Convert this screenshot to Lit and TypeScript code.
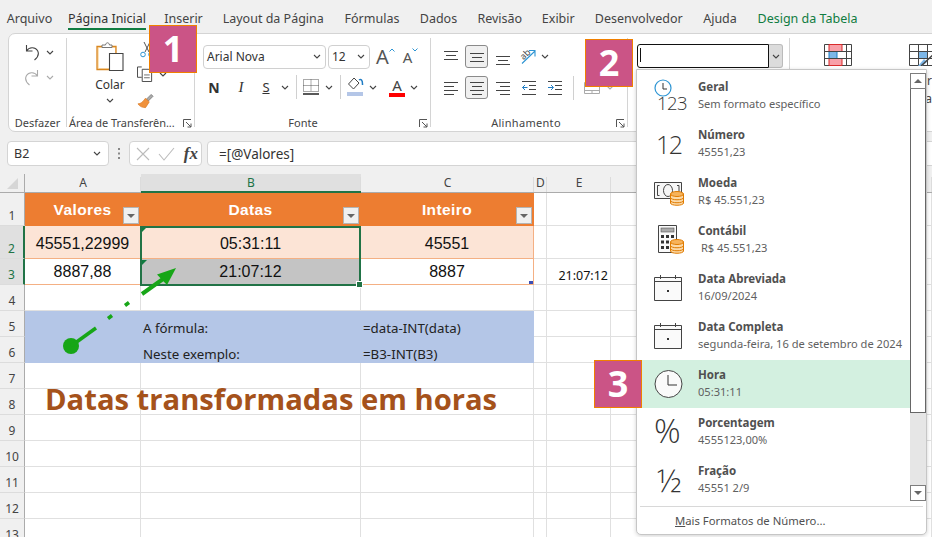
import { LitElement, html, css, svg } from "lit";
import { customElement } from "lit/decorators.js";

const chev = (c = "#444") => html`<svg class="chev" width="8" height="5" viewBox="0 0 8 5"><path d="M1 1l3 3 3-3" fill="none" stroke="${c}" stroke-width="1.1"/></svg>`;
const launcher = html`<svg class="launch" width="9" height="9" viewBox="0 0 9 9"><path d="M.5 8V.5H8M3 3l5 5M8 4.500V8H4.500" fill="none" stroke="#555"/></svg>`;
const lines = (rows: number[][], w = 14, h = 14) => html`<svg width="${w}" height="${h}" viewBox="0 0 ${w} ${h}">${rows.map(([a, b, y]) => svg`<path d="M${a} ${y + 0.5}H${b}" stroke="#444" fill="none"/>`)}</svg>`;

const coins = (x: number, y: number) => svg`<g fill="#fff" stroke="#E07B00" stroke-width="1"><path d="M${x} ${y + 2}v9c0 3 13 3 13 0v-9z" fill="#FBD9A8"/><ellipse cx="${x + 6.500}" cy="${y + 2}" rx="6.500" ry="2.500" fill="#F7B35B"/><path d="M${x} ${y + 5.500}c0 3 13 3 13 0M${x} ${y + 8.500}c0 3 13 3 13 0" fill="none"/></g>`;
const calendar = html`<svg width="30" height="28" viewBox="0 0 30 28"><path d="M.5 3.500h27v23H.5zM.5 7.500h27M6.500 1v4M21.500 1v4" fill="#fafafa" stroke="#444"/><rect x="13" y="16" width="2" height="2" fill="#333"/></svg>`;

const MENU = [
  { t: "Geral", s: "Sem formato específico", i: html`<div class="ic geral"><svg width="18" height="18" viewBox="0 0 18 18"><circle cx="9" cy="9" r="8" fill="none" stroke="#2E95D3" stroke-width="1.200"/><path d="M9 4v6h4" fill="none" stroke="#333"/></svg><span>123</span></div>` },
  { t: "Número", s: "45551,23", i: html`<div class="ic big12">12</div>` },
  { t: "Moeda", s: "R$ 45.551,23", i: html`<div class="ic"><svg class="low" width="34" height="30" viewBox="0 0 34 30"><path d="M.5 1.500h27v16H.5z" fill="#f6f6f6" stroke="#444"/><path d="M5.500 4.500h-2v10h2M23 4.500h2v10h-2" fill="none" stroke="#444"/><ellipse cx="14" cy="9.500" rx="4.500" ry="6" fill="none" stroke="#444"/>${coins(16.500, 11)}</svg></div>` },
  { t: "Contábil", s: "\u00a0R$ 45.551,23", i: html`<div class="ic"><svg width="30" height="30" viewBox="0 0 30 30"><path d="M4.500 .5h18v27h-18z" fill="#fafafa" stroke="#444"/><rect x="7" y="3" width="13" height="4" fill="#aaa" stroke="#555" stroke-width=".6"/><g fill="#333"><rect x="7" y="10" width="3" height="3"/><rect x="12" y="10" width="3" height="3"/><rect x="17" y="10" width="3" height="3"/><rect x="7" y="15.500" width="3" height="3"/><rect x="12" y="15.500" width="3" height="3"/><rect x="7" y="21" width="3" height="3"/><rect x="12" y="21" width="3" height="3"/></g>${coins(16.500, 15)}</svg></div>` },
  { t: "Data Abreviada", s: "16/09/2024", i: html`<div class="ic">${calendar}</div>` },
  { t: "Data Completa", s: "segunda-feira, 16 de setembro de 2024", i: html`<div class="ic">${calendar}</div>` },
  { t: "Hora", s: "05:31:11", on: true, i: html`<div class="ic"><svg width="30" height="30" viewBox="0 0 30 30"><circle cx="14.500" cy="15" r="13.500" fill="#fafafa" stroke="#444"/><path d="M14 6v10h9" fill="none" stroke="#333"/></svg></div>` },
  { t: "Porcentagem", s: "4555123,00%", i: html`<div class="ic pct">%</div>` },
  { t: "Fração", s: "45551 2/9", i: html`<div class="ic pct frac">½</div>` },
];

const TABS: [string, number][] = [
  ["Arquivo", 59], ["Página Inicial", 96], ["Inserir", 57], ["Layout da Página", 122.500], ["Fórmulas", 75],
  ["Dados", 58], ["Revisão", 64.500], ["Exibir", 52.500], ["Desenvolvedor", 108.500], ["Ajuda", 54], ["Design da Tabela", 121],
];

const ROWS = [33, 33, 26, 26, 26, 26, 26, 26, 26, 26, 26, 26, 26];
const COLS = ["A", "B", "C", "D", "E", ""];

const filter = html`<span class="filter"></span>`;
const tick = html`<span class="tick"></span>`;

function cell(r: number, c: number) {
  const k = `${r}${COLS[c]}`;
  const base = "cell";
  if (r === 1 && c < 3) return html`<div class="${base} head">${["Valores", "Datas", "Inteiro"][c]}${filter}</div>`;
  if (r === 2 && c < 3) return html`<div class="${base} band ${c === 2 ? "rt" : ""}">${["45551,22999", "05:31:11", "45551"][c]}${c === 1 ? tick : ""}</div>`;
  if (r === 3 && c < 3) return html`<div class="${base} last ${c === 1 ? "grey" : ""} ${c === 2 ? "rt" : ""}">${["8887,88", "21:07:12", "8887"][c]}${c === 1 ? tick : ""}${c === 2 ? html`<span class="resize"></span>` : ""}</div>`;
  if ((r === 5 || r === 6) && c < 3) {
    const txt = r === 5 ? ["", "A fórmula:", "=data-INT(data)"] : ["", "Neste exemplo:", "=B3-INT(B3)"];
    return html`<div class="${base} blue">${txt[c]}</div>`;
  }
  if (k === "3E") return html`<div class="${base} etime">21:07:12</div>`;
  if (k === "8A") return html`<div class="${base}"><span class="title">Datas transformadas em horas</span></div>`;
  return html`<div class="${base}"></div>`;
}

@customElement("app-root")
export class AppRoot extends LitElement {
  static styles = css`
    :host { display: block; position: relative; width: 932px; height: 537px; overflow: hidden; background: #f0f0f0; font-family: "Noto Sans", "Open Sans", sans-serif; font-size: 12px; color: #444; }
    svg { display: block; }
    .tabs { display: flex; height: 33px; align-items: flex-start; }
    .tab { text-align: center; flex: none; font-size: 12.500px; line-height: 17px; padding-top: 10px; color: #444; white-space: nowrap; }
    .tab span { display: inline-block; height: 18px; }
    .tab .active { border-bottom: 2px solid #107C41; color: #333; }
    .tab.green { color: #107C41; }
    .ribbon { display: flex; height: 99px; box-sizing: border-box; width: 940px; margin-left: 8px; padding: 4px 0; background: #fff; border: 1px solid #d4d4d4; border-radius: 7px; }
    .group { flex: none; box-sizing: border-box; border-right: 1px solid #d4d4d4; display: flex; flex-direction: column; }
    .gbody { flex: 1; min-height: 0; }
    .gfoot { display: flex; align-items: center; height: 14px; font-size: 11px; color: #444; line-height: 14px; white-space: nowrap; margin-bottom: -3px; }
    .gfoot .lb { flex: 1; text-align: center; overflow: hidden; }
    .gfoot .launch { flex: none; margin: 0 2px 0 2px; }
    .lb.alin { letter-spacing: .3px; padding-right: 6px; }
    .lb.fonte { padding-right: 14px; }
    .lb.area { padding-left: 2px; text-align: left; letter-spacing: -.05px; }
    .undo { width: 58px; }
    .undo .gbody { padding: 2px 0 0 15px; display: grid; grid-template-rows: 24px 26px; grid-template-columns: 22px 10px; align-items: center; justify-items: start; align-content: start; }
    .clip { width: 128px; }
    .clip .gbody { display: flex; }
    .paste { padding-top: 3px; display: flex; flex-direction: column; align-items: center; padding-left: 16px; box-sizing: border-box; width: 70px; font-size: 12px; }
    .paste .p-l { line-height: 16px; margin-top: 6px; color: #333; }
    .paste .chev { margin-top: 5px; }
    .small { display: grid; grid-template-rows: 22px 28px 26px; align-items: center; justify-items: start; align-content: start; }
    .copy { display: flex; align-items: center; gap: 5px; }
    .font { width: 236px; padding-left: 8px; }
    .font .r1 { display: flex; align-items: center; margin-top: 6px; height: 25px; }
    .sel { box-sizing: border-box; height: 24px; border: 1px solid #d0d0d0; border-radius: 4px; display: flex; align-items: center; justify-content: space-between; padding: 0 4px 0 3px; background: #fff; color: #333; font-size: 12px; }
    .sel.a { width: 123px; }
    .sel.b { width: 42px; margin-left: 2px; }
    .grow { width: 25px; display: flex; justify-content: center; font-size: 20px; line-height: 24px; color: #555; }
    .grow.first { margin-left: 3px; }
    .grow.sm { font-size: 15px; }
    .grow svg { margin-top: 3px; }
    .font .r2 { display: grid; grid-template-columns: 27px 25px 26px 15px 7px 22px 15px 7px 22px 19px 22px 8px; height: 30px; align-items: center; margin-top: 3px; }
    .c { width: 22px; text-align: center; color: #333; font-size: 14px; }
    .c.n { font-weight: 700; }
    .c.i { font-style: italic; font-family: "Liberation Serif", serif; font-size: 15px; }
    .c.s { text-decoration: underline; font-size: 13px; }
    .vsep { width: 1px; height: 24px; background: #d0d0d0; }
    .fontA { display: flex; flex-direction: column; align-items: center; width: 18px; font-size: 15px; line-height: 14px; color: #444; }
    .fontA i { display: block; width: 16px; height: 4px; background: #f00; margin-top: 1px; }
    .align { width: 197px; padding-left: 13px; }
    .align .r1 { display: grid; grid-template-columns: 21px 31px 24px 21px 8px; align-items: center; margin-top: 6px; height: 25px; }
    .align .r2 { display: grid; grid-template-columns: 21px 31px 26px 26px 25px 11px 22px 8px; align-items: center; height: 25px; margin-top: 6px; }
    .pressed { box-sizing: border-box; width: 23px; height: 23px; background: #f0f0f0; border: 1px solid #8a8a8a; border-radius: 3px; display: flex; align-items: center; justify-content: center; }
    .shift { margin-top: 6px; }
    .number { width: 162px; padding-left: 9px; }
    .numbox { display: flex; margin-top: 6px; width: 146px; height: 24px; box-sizing: border-box; }
    .numbox .in { flex: 1; border: 1.500px solid #111; border-radius: 3px 0 0 3px; }
    .numbox .in::before { content: ""; display: block; width: 1px; height: 14px; background: #111; margin: 3px 0 0 2px; }
    .numbox .bt { width: 13px; background: #dcdcdc; border: 1px solid #bbb; border-left: none; border-radius: 0 3px 3px 0; display: flex; align-items: center; justify-content: center; }
    .styles { display: flex; padding-left: 34px; gap: 57px; padding-top: 6px; align-items: flex-start; }
    .fmt { font-size: 12px; line-height: 18px; color: #444; text-align: right; margin: 6px 0 0 -60px; width: 83px; white-space: nowrap; }
    .fbar { display: flex; height: 25px; margin-top: 9px; align-items: stretch; }
    .fbox { box-sizing: border-box; background: #fff; border: 1px solid #d4d4d4; border-radius: 4px; display: flex; align-items: center; color: #333; }
    .name { margin-left: 7px; width: 102px; padding: 0 7px 0 6px; justify-content: space-between; font-size: 12.500px; }
    .dots { width: 20px; display: flex; align-items: center; justify-content: center; }
    .fx { width: 73px; padding: 0 3px 0 6px; justify-content: space-between; }
    .fx em { font-family: "Liberation Serif", serif; font-size: 17px; font-weight: 700; font-style: italic; color: #444; }
    .fv { margin-left: 5px; flex: 1; margin-right: -10px; padding-left: 11px; font-size: 13.500px; }
    .sheet { position: relative; margin-top: 8px; display: grid; grid-template-columns: 25px 116px 220px 173px 13px 64px 321px; grid-template-rows: 19px 33px 33px 26px 26px 26px 26px 26px 26px 26px 26px 26px 26px 26px; width: 932px; }
    .ch { background: #f0f0f0; border-bottom: 1px solid #ababab; box-sizing: border-box; text-align: center; font-size: 12px; line-height: 18px; position: relative; color: #444; }
    .ch::after { content: ""; position: absolute; right: 0; top: 3px; bottom: 0; width: 1px; background: #dcdcdc; }
    .ch.on { background: #e0e0e0; border-bottom: 2px solid #217346; color: #217346; }
    .corner { background: #f0f0f0; border-bottom: 1px solid #ababab; border-right: 1px solid #ababab; box-sizing: border-box; display: flex; align-items: center; justify-content: center; }
    .rh { box-sizing: border-box; background: #f0f0f0; border-right: 1px solid #ababab; border-bottom: 1px solid #dcdcdc; display: flex; align-items: flex-end; justify-content: center; font-size: 12px; line-height: 17px; padding-bottom: 1px; color: #444; }
    .rh.on { background: #e0e0e0; color: #217346; border-right: 2px solid #217346; }
    .cell { box-sizing: border-box; background: #fff; border-right: 1px solid #e0e0e0; border-bottom: 1px solid #e0e0e0; position: relative; display: flex; align-items: center; justify-content: center; color: #111; font-family: "Liberation Sans", Arial, sans-serif; font-size: 16px; }
    .head { background: #ED7D31; color: #fff; font-weight: 700; font-size: 15.500px; letter-spacing: .4px; border-color: #ED7D31; padding-top: 2px; }
    .band { background: #FCE4D6; border-right-color: #FCE4D6; border-bottom-color: #F4B084; padding-top: 3px; }
    .last { border-right-color: transparent; border-bottom-color: #F4B084; }
    .grey { background: #C4C4C4; }
    .rt { border-right-color: #F4B084; }
    .blue { background: #B4C6E7; border-color: #B4C6E7; justify-content: flex-start; align-items: flex-end; padding: 0 0 0 2px; font-family: "Noto Sans", sans-serif; font-size: 13.300px; line-height: 16px; color: #222; }
    .etime { font-family: "Noto Sans", sans-serif; font-size: 12.500px; justify-content: flex-end; align-items: flex-end; padding-right: 2px; line-height: 17px; }
    .title { position: absolute; left: 20px; top: -3px; white-space: nowrap; z-index: 2; font-family: "Open Sans", sans-serif; font-weight: 700; font-size: 29.200px; line-height: 26px; color: #A5521B; }
    .filter { position: absolute; right: 1px; bottom: 1px; width: 16px; height: 17px; box-sizing: border-box; background: #f0f0f0; border: 1px solid #b4b4b4; }
    .filter::after { content: ""; position: absolute; left: 3px; top: 6px; border-left: 4px solid transparent; border-right: 4px solid transparent; border-top: 4px solid #666; }
    .tick { position: absolute; left: 1px; top: 1px; border-top: 5px solid #107C41; border-right: 5px solid transparent; }
    .resize { position: absolute; right: 0; bottom: 0; width: 4px; height: 3px; background: #3a4fb5; }
    .selection { position: absolute; left: 140px; top: 52px; width: 221px; height: 60px; box-sizing: border-box; border: 2px solid #217346; pointer-events: none; z-index: 3; }
    .selection::after { content: ""; position: absolute; right: -4px; bottom: -4px; width: 5px; height: 5px; background: #217346; border: 1px solid #fff; }
    .arrow { position: absolute; left: 0; top: 0; z-index: 4; pointer-events: none; }
    .badge { position: absolute; box-sizing: border-box; width: 48px; height: 48px; background: #CB5486; border: 1px solid #F08000; color: #fff; font-family: "Open Sans", sans-serif; font-weight: 700; font-size: 36px; line-height: 46px; text-align: center; z-index: 8; }
    .b1 { left: 149px; top: 25px; }
    .b2 { left: 585px; top: 39px; }
    .b3 { left: 594px; top: 360px; }
    .menu { position: absolute; left: 636px; top: 69px; width: 291px; height: 466px; box-sizing: border-box; background: #fff; border: 1px solid #c6c6c6; border-radius: 0 0 5px 5px; box-shadow: 0 1px 4px rgba(0,0,0,.18); z-index: 6; display: flex; flex-direction: column; }
    .mtop { display: flex; height: 431px; padding: 2px 0 0 3px; }
    .list { width: 270px; flex: none; }
    .item { height: 48px; display: flex; align-items: flex-start; }
    .item.on { background: #D3F0E0; }
    .iw { width: 58px; flex: none; height: 48px; display: flex; align-items: center; padding-left: 14px; box-sizing: border-box; }
    .ic { width: 34px; height: 34px; display: flex; align-items: center; position: relative; color: #333; }
    .ic .low { margin-top: 8px; }
    .geral { display: block; box-sizing: border-box; }
    .geral span { position: absolute; left: 3px; top: 14px; font-size: 18.500px; line-height: 20px; font-weight: 300; font-family: "Open Sans", sans-serif; letter-spacing: -.6px; }
    .big12 { font-size: 25px; font-family: "Open Sans", sans-serif; font-weight: 300; padding-left: 2px; box-sizing: border-box; letter-spacing: -1.500px; }
    .pct { font-size: 33px; font-family: "Open Sans", sans-serif; font-weight: 300; padding-bottom: 4px; box-sizing: border-box; }
    .frac { font-size: 32px; padding: 0 0 2px 3px; }
    .tx { padding-top: 7px; }
    .tx b { display: block; font-size: 11.500px; line-height: 16px; color: #505050; font-weight: 700; }
    .tx span { display: block; font-size: 11.100px; line-height: 17px; color: #606060; white-space: nowrap; }
    .scroll { width: 16px; height: 428px; margin-top: 1px; background: #e6e6e6; display: flex; flex-direction: column; flex: none; }
    .sb { box-sizing: border-box; height: 16px; border: 1px solid #7d7d7d; background: #fff; display: flex; align-items: center; justify-content: center; flex: none; }
    .thumb { box-sizing: border-box; height: 324px; background: #fff; border: 1px solid #666; border-top: none; flex: none; }
    .sb i { display: block; border-left: 4px solid transparent; border-right: 4px solid transparent; }
    .sb .up { border-bottom: 4px solid #666; }
    .sb .dn { border-top: 4px solid #666; }
    .sp { flex: 1; }
    .mfoot { margin: 3px 3px 0; border-top: 1px solid #d8d8d8; padding: 6px 0 0 35px; font-size: 11.300px; line-height: 16px; color: #505050; }
    .mfoot u { text-decoration: underline; }
  `;

  render() {
    return html`
      <div class="tabs">
        ${TABS.map(([t, w], i) => html`<div class="tab ${i === 10 ? "green" : ""}" style="width:${w}px"><span class="${i === 1 ? "active" : ""}">${t}</span></div>`)}
      </div>
      <div class="ribbon">
        <div class="group undo">
          <div class="gbody">
            <svg width="16" height="17" viewBox="0 0 16 17"><path d="M2.500 1v6h6M2.500 7C5 3 11 2.500 13.500 6.500c2 3.500 0 7-3 9.500" fill="none" stroke="#444" stroke-width="1.100"/></svg>${chev()}
            <svg width="16" height="17" viewBox="0 0 16 17"><path d="M13.500 1v6h-6M13.500 7C11 3 5 2.500 2.500 6.500c-2 3.500 0 7 3 9.500" fill="none" stroke="#aaa" stroke-width="1.100"/></svg>${chev("#aaa")}
          </div>
          <div class="gfoot"><div class="lb">Desfazer</div></div>
        </div>
        <div class="group clip">
          <div class="gbody">
            <div class="paste">
              <svg width="28" height="30" viewBox="0 0 28 30"><path d="M1 5.500h19v23H1z" fill="#FCE3BB" stroke="#D9861F" stroke-width="1.300"/><path d="M3 7h16v20H3z" fill="#fff"/><path d="M6 6.500V4h3.500c.5-3 3.500-3 4 0H16v2.500z" fill="#fff" stroke="#777"/><path d="M13.500 12.500h13.500v17H13.500z" fill="#fff" stroke="#444" stroke-width="1.100"/></svg>
              <div class="p-l">Colar</div>
              ${chev()}
            </div>
            <div class="small">
              <svg width="16" height="17" style="margin-left:2px" viewBox="0 0 16 17"><path d="M5 1l5 10M11 1L6 11" stroke="#555" fill="none"/><circle cx="4" cy="13.500" r="2.300" fill="none" stroke="#2E95D3"/><circle cx="12" cy="13.500" r="2.300" fill="none" stroke="#2E95D3"/></svg>
              <div class="copy">
                <svg width="17" height="16" viewBox="0 0 18 17"><path d="M5 1H.5v11H5" fill="#fff" stroke="#444"/><path d="M5.500 3.500h7l3 3v10h-10z" fill="#fff" stroke="#444"/><path d="M7.500 9.500h6M7.500 12.500h6" stroke="#666"/></svg>
                ${chev()}
              </div>
              <svg width="17" height="17" viewBox="0 0 18 17"><path d="M10 6l5-5 2 2-5 5z" fill="#aaa" stroke="#666" stroke-width=".7"/><path d="M9 5l4 4-4 6C6 15 3 14 1 11c3 0 5-2 8-6z" fill="#F0923C" stroke="#D9761F" stroke-width=".7"/></svg>
            </div>
          </div>
          <div class="gfoot"><div class="lb area">Área de Transferên...</div>${launcher}</div>
        </div>
        <div class="group font">
          <div class="gbody">
            <div class="r1">
              <div class="sel a"><span>Arial Nova</span>${chev()}</div>
              <div class="sel b"><span>12</span>${chev()}</div>
              <div class="grow first">A<svg width="6" height="4" viewBox="0 0 6 4"><path d="M.5 3.500L3 1l2.500 2.500" fill="none" stroke="#2E95D3"/></svg></div>
              <div class="grow sm">A<svg width="6" height="4" viewBox="0 0 6 4"><path d="M.5 .5L3 3 5.500 .5" fill="none" stroke="#2E95D3"/></svg></div>
            </div>
            <div class="r2">
              <div class="c n">N</div><div class="c i">I</div><div class="c s">S</div>${chev()}
              <div class="vsep"></div>
              <svg width="16" height="16" viewBox="0 0 16 16"><path d="M.5 .5h15v12H.5zM.5 6.500h15M8 .5v12" fill="none" stroke="#555" stroke-dasharray="1 1"/><path d="M0 15h16" stroke="#222" stroke-width="1.500"/></svg>${chev()}
              <div class="vsep"></div>
              <svg width="17" height="20" viewBox="0 0 17 20"><path d="M7 1L1.500 7l5 5 5.500-6z" fill="#fff" stroke="#444"/><path d="M12 3c2-1.500 3.500 0 3.500 4v1" stroke="#1F7CC4" stroke-width="1.500" fill="none"/><rect y="15" width="16" height="4" fill="#B4C6E7"/></svg>${chev()}
              <div class="fontA">A<i></i></div>${chev()}
            </div>
          </div>
          <div class="gfoot"><div class="lb fonte">Fonte</div>${launcher}</div>
        </div>
        <div class="group align">
          <div class="gbody">
            <div class="r1">
              ${lines([[0, 14, 1], [2, 12, 5], [0, 14, 9]])}
              <div class="pressed">${lines([[0, 14, 3], [2, 12, 7], [0, 14, 11]])}</div>
              <div class="shift">${lines([[0, 14, 3], [2, 12, 7], [0, 14, 11]])}</div>
              <svg width="17" height="17" viewBox="0 0 17 17"><text x="1" y="10" font-size="9" font-family="Noto Sans" fill="#444" transform="rotate(-45 5 8)">ab</text><path d="M2 15.500L15 3M9 2.500h6v6" fill="none" stroke="#2E95D3" stroke-width="1.100"/></svg>
              ${chev()}
            </div>
            <div class="r2">
              ${lines([[0, 14, 1], [0, 10, 5], [0, 14, 9], [0, 10, 13]])}
              <div class="pressed">${lines([[0, 14, 1], [2, 12, 5], [0, 14, 9], [2, 12, 13]])}</div>
              ${lines([[0, 14, 1], [4, 14, 5], [0, 14, 9], [4, 14, 13]])}
              <svg width="14" height="14" viewBox="0 0 14 14"><path d="M0 .5h14M7 4.500h7M7 8.500h7M0 13.500h14" stroke="#444"/><path d="M5.500 6.500H.5M3 4L.5 6.500 3 9" stroke="#1F7CC4" fill="none"/></svg>
              <svg width="14" height="14" viewBox="0 0 14 14"><path d="M0 .5h14M7 4.500h7M7 8.500h7M0 13.500h14" stroke="#444"/><path d="M0 6.500h5M3 4l2.500 2.500L3 9" stroke="#1F7CC4" fill="none"/></svg>
              <div class="vsep"></div>
              <svg width="16" height="12" viewBox="0 0 16 12"><path d="M.5 .5h15v11H.5zM.5 8.500h15M8 8.500v3M3 4.500h10" fill="none" stroke="#aaa"/></svg>
              ${chev("#aaa")}
            </div>
          </div>
          <div class="gfoot"><div class="lb alin">Alinhamento</div>${launcher}</div>
        </div>
        <div class="group number">
          <div class="gbody">
            <div class="numbox"><div class="in"></div><div class="bt">${chev()}</div></div>
          </div>
        </div>
        <div class="styles">
          <svg width="28" height="22" viewBox="0 0 28 22"><path d="M.5 .5h27v21H.5z" fill="#fff" stroke="#444"/><path d="M5 .5h13v7H5zM5 14.500h13v7H5z" fill="#F8A0A8" stroke="#D92B2B"/><path d="M5 7.500h8v7H5z" fill="#7DB7E8" stroke="#1F7CC4"/><path d="M.5 7.500h27M.5 14.500h27M22.500 .5v21" stroke="#444" fill="none"/></svg>
          <div>
            <svg width="28" height="22" viewBox="0 0 28 22"><path d="M.5 .5h27v21H.5zM.5 7.500h27M.5 14.500h27M9.500 .5v21M18.500 .5v21" fill="#fff" stroke="#444"/><path d="M10 8h8v6h-8z" fill="#7DB7E8"/><path d="M9 22l6-7 3 3-6 5z" fill="#7DB7E8"/><path d="M12 22L27 8" stroke="#444" stroke-width="1.500"/></svg>
            <div class="fmt">Formatar<br />como Tabela</div>
          </div>
        </div>
      </div>
      <div class="fbar">
        <div class="fbox name"><span>B2</span>${chev()}</div>
        <div class="dots"><svg width="3" height="11" viewBox="0 0 3 11"><path d="M0 0h2v2H0zM0 4.500h2v2H0zM0 9h2v2H0z" fill="#888"/></svg></div>
        <div class="fbox fx">
          <svg width="14" height="14" viewBox="0 0 14 14"><path d="M1 1l12 12M13 1L1 13" stroke="#bbb" fill="none" stroke-width="1.100"/></svg>
          <svg width="17" height="14" viewBox="0 0 17 14"><path d="M1 7l5 6L16 1" stroke="#bbb" fill="none" stroke-width="1.100"/></svg>
          <em>fx</em>
        </div>
        <div class="fbox fv">=[@Valores]</div>
      </div>
      <div class="sheet">
        <div class="corner"><svg width="13" height="13" viewBox="0 0 13 13"><path d="M12 1v11H1z" fill="#d6d6d6"/></svg></div>
        ${COLS.map((c, i) => html`<div class="ch ${i === 1 ? "on" : ""}">${c}</div>`)}
        ${ROWS.map((_, ri) => html`
          <div class="rh ${ri === 1 || ri === 2 ? "on" : ""}">${ri + 1}</div>
          ${COLS.map((_c, ci) => cell(ri + 1, ci))}
        `)}
        <div class="selection"></div>
        <svg class="arrow" width="932" height="363" viewBox="0 174 932 363">
          <g stroke="#17A617" fill="#17A617">
            <circle cx="71" cy="346" r="8" stroke="none"/>
            <path d="M71 346L96 328" stroke-width="3.500"/>
            <path d="M108 318.500l4-3M125 305.500l4-3" stroke-width="3.500"/>
            <path d="M142 294L163 279" stroke-width="4"/>
            <path d="M176 268L157 274.500 167 285z" stroke="none"/>
          </g>
        </svg>
      </div>
      <div class="badge b1">1</div>
      <div class="badge b2">2</div>
      <div class="badge b3">3</div>
      <div class="menu">
        <div class="mtop">
          <div class="list">
            ${MENU.map((m) => html`<div class="item ${m.on ? "on" : ""}"><div class="iw">${m.i}</div><div class="tx"><b>${m.t}</b><span>${m.s}</span></div></div>`)}
          </div>
          <div class="scroll">
            <div class="sb"><i class="up"></i></div>
            <div class="thumb"></div>
            <div class="sp"></div>
            <div class="sb"><i class="dn"></i></div>
          </div>
        </div>
        <div class="mfoot"><u>M</u>ais Formatos de Número...</div>
      </div>
    `;
  }
}
